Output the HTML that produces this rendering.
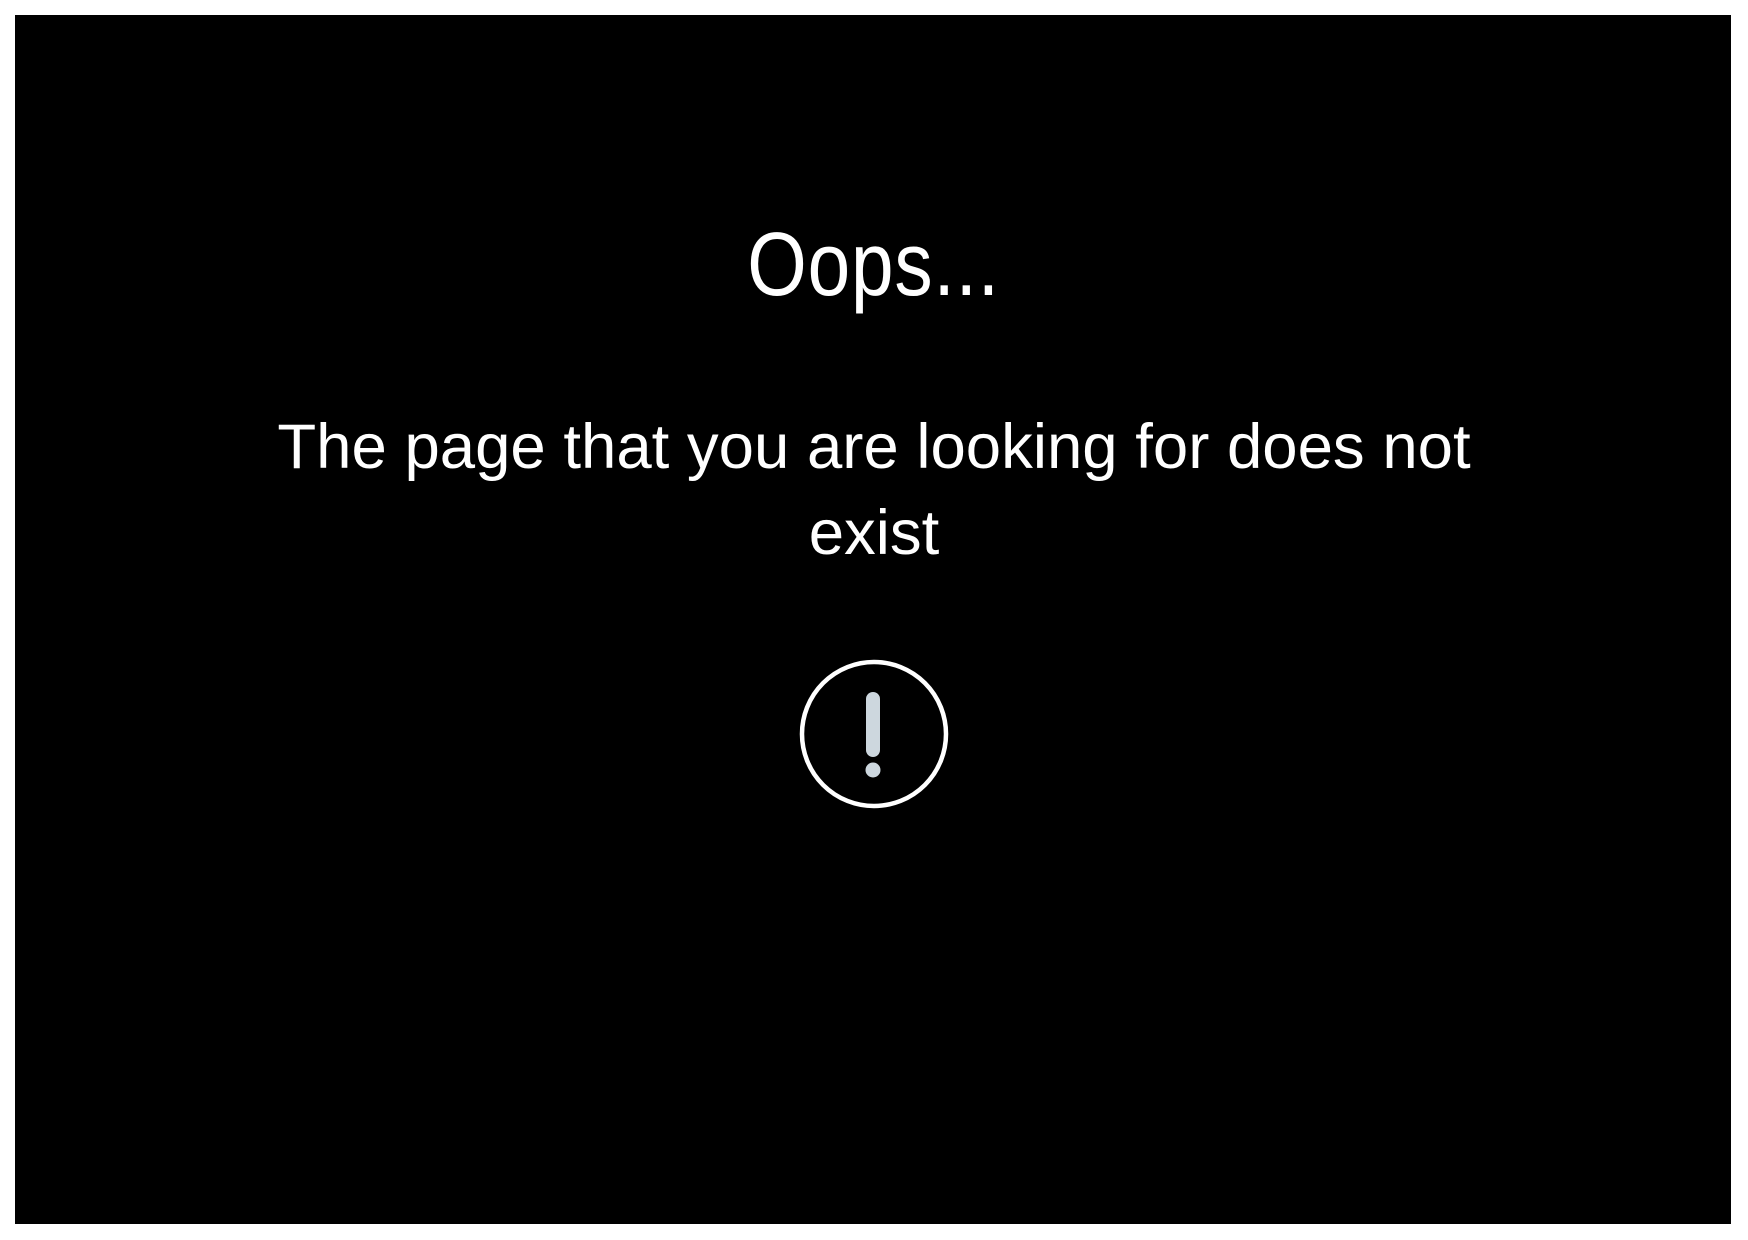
<!DOCTYPE html>
<html><head><meta charset="utf-8"><style>
html,body{margin:0;padding:0;background:#fff;width:1748px;height:1240px;overflow:hidden;position:relative}
.panel{position:absolute;left:15px;top:15px;width:1716px;height:1209px;background:#000}
.t{position:absolute;left:0;width:1748px;text-align:center;color:#fff;font-family:"Liberation Sans",sans-serif;white-space:nowrap}
.oops{top:220px;font-size:90px;line-height:90px;}
.oops span{display:inline-block;transform:scaleX(0.85);transform-origin:center;letter-spacing:1px}
.msg{font-size:63.5px;line-height:64px;}
</style></head><body>
<div class="panel"></div>
<div class="t oops"><span>Oops...</span></div>
<div class="t msg" style="top:415px">The page that you are looking for does not</div>
<div class="t msg" style="top:501px">exist</div>
<svg style="position:absolute;left:0;top:0" width="1748" height="1240">
<circle cx="874" cy="734" r="72" fill="none" stroke="#fff" stroke-width="4.5"/>
<line x1="873" y1="699" x2="873" y2="750" stroke="#cdd7de" stroke-width="14" stroke-linecap="round"/>
<circle cx="873" cy="770" r="7.5" fill="#cdd7de"/>
</svg>
</body></html>
